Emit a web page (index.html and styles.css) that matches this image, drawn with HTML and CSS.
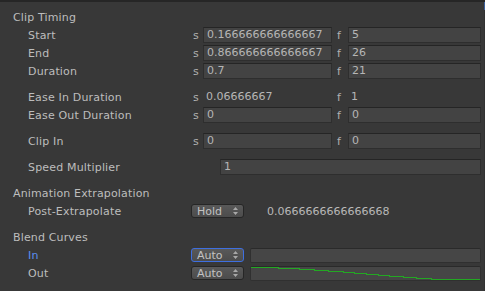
FILE: index.html
```html
<!DOCTYPE html>
<html>
<head>
<meta charset="utf-8">
<title>Clip Inspector</title>
<link rel="stylesheet" href="styles.css">
</head>
<body>
<div class="inspector">

  <div class="section">
    <div class="row header">Clip Timing</div>
    <div class="row">
      <span class="label">Start</span>
      <span class="unit">s</span><span class="field fs">0.166666666666667</span>
      <span class="unit uf">f</span><span class="field ff">5</span>
    </div>
    <div class="row">
      <span class="label">End</span>
      <span class="unit">s</span><span class="field fs">0.866666666666667</span>
      <span class="unit uf">f</span><span class="field ff">26</span>
    </div>
    <div class="row">
      <span class="label">Duration</span>
      <span class="unit">s</span><span class="field fs">0.7</span>
      <span class="unit uf">f</span><span class="field ff">21</span>
    </div>
  </div>

  <div class="section">
    <div class="row">
      <span class="label">Ease In Duration</span>
      <span class="unit">s</span><span class="plain fs">0.06666667</span>
      <span class="unit uf">f</span><span class="plain ff">1</span>
    </div>
    <div class="row">
      <span class="label">Ease Out Duration</span>
      <span class="unit">s</span><span class="field fs">0</span>
      <span class="unit uf">f</span><span class="field ff">0</span>
    </div>
  </div>

  <div class="section">
    <div class="row">
      <span class="label">Clip In</span>
      <span class="unit">s</span><span class="field fs">0</span>
      <span class="unit uf">f</span><span class="field ff">0</span>
    </div>
  </div>

  <div class="section">
    <div class="row">
      <span class="label speed">Speed Multiplier</span>
      <span class="field ff">1</span>
    </div>
  </div>

  <div class="section">
    <div class="row header">Animation Extrapolation</div>
    <div class="row">
      <span class="label short">Post-Extrapolate</span>
      <span class="popup">Hold<svg class="arrows" width="5" height="8" viewBox="0 0 5 8"><path d="M2.5 0 L5 3 L0 3 Z M0 5 L5 5 L2.5 8 Z" fill="#a8a8a8"/></svg></span>
      <span class="extra">0.0666666666666668</span>
    </div>
  </div>

  <div class="section">
    <div class="row header">Blend Curves</div>
    <div class="row">
      <span class="label short active">In</span>
      <span class="popup focus">Auto<svg class="arrows" width="5" height="8" viewBox="0 0 5 8"><path d="M2.5 0 L5 3 L0 3 Z M0 5 L5 5 L2.5 8 Z" fill="#a8a8a8"/></svg></span>
      <span class="curve"></span>
    </div>
    <div class="row">
      <span class="label short">Out</span>
      <span class="popup">Auto<svg class="arrows" width="5" height="8" viewBox="0 0 5 8"><path d="M2.5 0 L5 3 L0 3 Z M0 5 L5 5 L2.5 8 Z" fill="#a8a8a8"/></svg></span>
      <span class="curve">
        <svg width="229" height="14" viewBox="0 0 229 14" shape-rendering="crispEdges">
          <path d="M0 0.5 H27 V1.5 H48 V2.5 H63 V3.5 H77 V4.5 H92 V5.5 H103 V6.5 H115 V7.5 H127 V8.5 H138 V9.5 H152 V10.5 H165 V11.5 H180 V12 H202 V12.5 H229" fill="none" stroke="#23a823" stroke-width="1"/>
        </svg>
      </span>
    </div>
  </div>

</div>
<div class="edge"></div>
</body>
</html>
```

FILE: styles.css
```css
html, body {
  margin: 0;
  height: 100%;
}

body {
  background-color: #383838;
  font-family: "DejaVu Sans", sans-serif;
  font-size: 11px;
  color: #bdbdbd;
  display: flex;
}

.inspector {
  flex: 1;
  border-top: 2px solid #262626;
  padding: 6px 3px 0 13px;
}

.edge {
  width: 3px;
  border-top: 2px solid #262626;
  background: linear-gradient(#3a5f9c 0, #3a5f9c 8px, #323232 8px);
}

.section {
  margin-bottom: 8px;
}

.row {
  display: flex;
  align-items: center;
  height: 18px;
  white-space: nowrap;
}

.header {
  letter-spacing: 0.15px;
}

.label {
  width: 160px;
  padding-left: 15px;
  letter-spacing: 0.17px;
}

.label.speed {
  width: 192px;
}

.label.short {
  width: 163px;
}

.label.active {
  color: #5b8ff2;
}

.unit {
  width: 10px;
  padding-left: 5px;
  color: #b0b0b0;
}

.unit.uf {
  width: 11px;
}

.field, .plain {
  box-sizing: border-box;
  height: 16px;
  line-height: 14px;
  padding-left: 3px;
  color: #b6b6b6;
}

.field {
  background-color: #434343;
  border: 1px solid #2e2e2e;
  border-top-color: #252525;
}

.plain {
  padding-left: 2px;
  border: 1px solid transparent;
}

.fs {
  width: 129px;
}

.ff {
  flex: 1;
}

.popup {
  box-sizing: border-box;
  width: 53px;
  height: 14px;
  margin-right: 6px;
  padding: 0 5px 0 5px;
  display: flex;
  align-items: center;
  justify-content: space-between;
  border: 1px solid #262626;
  border-radius: 3px;
  background: linear-gradient(#595959, #4c4c4c);
  color: #c2c2c2;
  font-size: 11px;
}

.popup.focus {
  border-color: #3e6fe0;
}

.arrows {
  display: block;
}

.extra {
  padding-left: 17px;
  color: #b8b8b8;
}

.curve {
  box-sizing: border-box;
  flex: 1;
  height: 15px;
  background-color: #464646;
  border: 1px solid #303030;
  border-top-color: #2a2a2a;
  border-radius: 2px;
}

.curve svg {
  display: block;
}
```
